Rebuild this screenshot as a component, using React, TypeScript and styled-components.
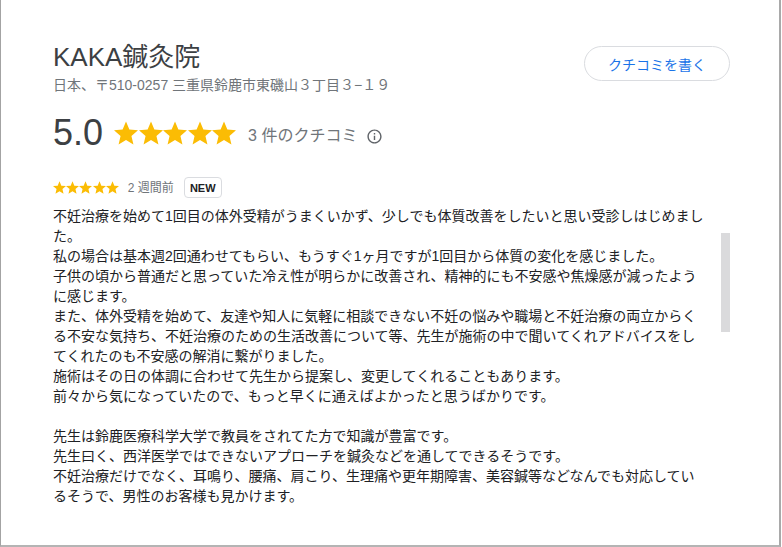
import React from "react";
import styled, { createGlobalStyle } from "styled-components";

const Global = createGlobalStyle`
  html, body { margin: 0; padding: 0; background: #ffffff; }
  body { font-family: "Liberation Sans", "Noto Sans CJK JP", sans-serif; }
`;

const FONT = `"Liberation Sans", "Noto Sans CJK JP", sans-serif`;

const Frame = styled.div`
  position: relative;
  box-sizing: border-box;
  width: 781px;
  height: 547px;
  border-left: 1px solid #a3a3a3;
  border-right: 2px solid #a9a9a9;
  border-bottom: 2px solid #b4b4b4;
  background: #fff;
  padding: 41px 49px 0 52px;
  font-family: ${FONT};
  overflow: hidden;
`;

const Header = styled.div`
  display: flex;
  justify-content: space-between;
  align-items: flex-start;
`;

const TitleBlock = styled.div`
  display: flex;
  flex-direction: column;
  gap: 2px;
`;

const Title = styled.h1`
  margin: 0;
  font-size: 26px;
  line-height: 32px;
  font-weight: 400;
  color: #3c4043;
`;

const Address = styled.div`
  font-size: 14px;
  line-height: 20px;
  color: #70757a;
`;

const WriteButton = styled.button`
  margin-top: 5px;
  box-sizing: border-box;
  width: 146px;
  height: 35px;
  border: 1px solid #dadce0;
  border-radius: 18px;
  background: #fff;
  color: #1a73e8;
  font-family: ${FONT};
  font-size: 14px;
  padding: 0;
  cursor: pointer;
`;

const RatingRow = styled.div`
  display: flex;
  align-items: center;
  margin-top: 16px;
  height: 44px;
`;

const Score = styled.span`
  font-size: 36px;
  line-height: 44px;
  color: #3c4043;
  margin-right: 11px;
`;

const Stars = styled.span<{ $size: number; $gap: number }>`
  display: inline-flex;
  gap: ${(p) => p.$gap}px;
  svg {
    width: ${(p) => p.$size}px;
    height: ${(p) => p.$size}px;
    display: block;
  }
`;

const Count = styled.span`
  font-size: 16px;
  line-height: 20px;
  color: #70757a;
  margin-left: 12px;
  margin-top: 6px;
`;

const InfoIcon = styled.svg`
  width: 17px;
  height: 17px;
  margin-left: 9px;
  margin-top: 6px;
  fill: #5f6368;
`;

const MetaRow = styled.div`
  display: flex;
  align-items: center;
  margin-top: 22px;
  height: 21px;
`;

const Ago = styled.span`
  font-size: 12px;
  line-height: 16px;
  color: #70757a;
  margin-left: 9px;
`;

const Badge = styled.span`
  box-sizing: border-box;
  margin-left: 10px;
  height: 21px;
  width: 38px;
  display: inline-flex;
  align-items: center;
  justify-content: center;
  border: 1px solid #dadce0;
  border-radius: 4px;
  font-size: 11px;
  font-weight: 700;
  color: #202124;
`;

const Body = styled.p`
  margin: 8px 0 0;
  width: 655px;
  font-size: 14px;
  line-height: 20px;
  color: #202124;
  white-space: pre-line;
`;

const ScrollThumb = styled.div`
  position: absolute;
  left: 720px;
  top: 233px;
  width: 9px;
  height: 99px;
  background: #dadadc;
`;

const STAR = "M12 17.27L18.18 21l-1.64-7.03L22 9.24l-7.19-.61L12 2 9.19 8.63 2 9.24l5.46 4.73L5.82 21z";

const StarRow = ({ size, gap }: { size: number; gap: number }) => (
  <Stars $size={size} $gap={gap}>
    {[0, 1, 2, 3, 4].map((i) => (
      <svg key={i} viewBox="2 1.5 20 20">
        <path d={STAR} fill="#fbbc04" />
      </svg>
    ))}
  </Stars>
);

const review = `不妊治療を始めて1回目の体外受精がうまくいかず、少しでも体質改善をしたいと思い受診しはじめました。
私の場合は基本週2回通わせてもらい、もうすぐ1ヶ月ですが1回目から体質の変化を感じました。
子供の頃から普通だと思っていた冷え性が明らかに改善され、精神的にも不安感や焦燥感が減ったように感じます。
また、体外受精を始めて、友達や知人に気軽に相談できない不妊の悩みや職場と不妊治療の両立からくる不安な気持ち、不妊治療のための生活改善について等、先生が施術の中で聞いてくれアドバイスをしてくれたのも不安感の解消に繋がりました。
施術はその日の体調に合わせて先生から提案し、変更してくれることもあります。
前々から気になっていたので、もっと早くに通えばよかったと思うばかりです。

先生は鈴鹿医療科学大学で教員をされてた方で知識が豊富です。
先生曰く、西洋医学ではできないアプローチを鍼灸などを通してできるそうです。
不妊治療だけでなく、耳鳴り、腰痛、肩こり、生理痛や更年期障害、美容鍼等などなんでも対応しているそうで、男性のお客様も見かけます。`;

export default function App() {
  return (
    <>
      <Global />
      <Frame>
        <Header>
          <TitleBlock>
            <Title>KAKA鍼灸院</Title>
            <Address>日本、〒510-0257 三重県鈴鹿市東磯山３丁目３−１９</Address>
          </TitleBlock>
          <WriteButton>クチコミを書く</WriteButton>
        </Header>
        <RatingRow>
          <Score>5.0</Score>
          <StarRow size={24} gap={0.5} />
          <Count>3 件のクチコミ</Count>
          <InfoIcon viewBox="0 0 24 24">
            <path d="M11 7h2v2h-2zm0 4h2v6h-2zm1-9C6.48 2 2 6.48 2 12s4.48 10 10 10 10-4.48 10-10S17.52 2 12 2zm0 18c-4.41 0-8-3.59-8-8s3.59-8 8-8 8 3.59 8 8-3.59 8-8 8z" />
          </InfoIcon>
        </RatingRow>
        <MetaRow>
          <StarRow size={13} gap={0.2} />
          <Ago>2 週間前</Ago>
          <Badge>NEW</Badge>
        </MetaRow>
        <Body>{review}</Body>
        <ScrollThumb />
      </Frame>
    </>
  );
}
